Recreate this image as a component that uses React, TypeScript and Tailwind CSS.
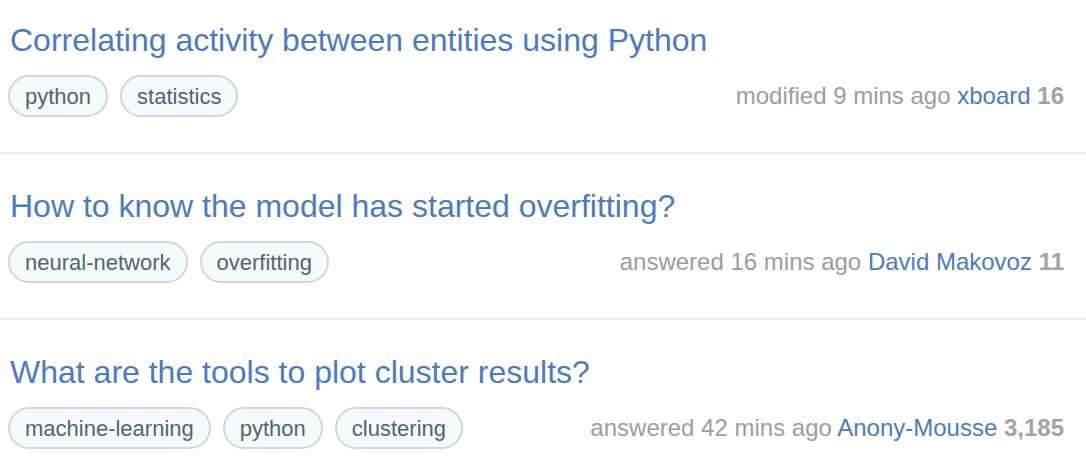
import React from 'react';

type Question = {
  title: string;
  tags: string[];
  action: string;
  time: string;
  user: string;
  rep: string;
};

const questions: Question[] = [
  {
    title: 'Correlating activity between entities using Python',
    tags: ['python', 'statistics'],
    action: 'modified',
    time: '9 mins ago',
    user: 'xboard',
    rep: '16',
  },
  {
    title: 'How to know the model has started overfitting?',
    tags: ['neural-network', 'overfitting'],
    action: 'answered',
    time: '16 mins ago',
    user: 'David Makovoz',
    rep: '11',
  },
  {
    title: 'What are the tools to plot cluster results?',
    tags: ['machine-learning', 'python', 'clustering'],
    action: 'answered',
    time: '42 mins ago',
    user: 'Anony-Mousse',
    rep: '3,185',
  },
];

const App = () => {
  return (
    <div
      className="w-[1086px] h-[476px] overflow-hidden bg-white"
      style={{ fontFamily: '"Liberation Sans", Arial, Helvetica, sans-serif' }}
    >
      <div className="-mt-[12px]">
        {questions.map((q, i) => (
          <div key={i} className="h-[166px] pt-[32px] pl-[10px] pr-[22px] border-b-2 border-[#eeeeee]">
            {/* Title */}
            <a className="block text-[32px] leading-[40px] text-[#4a7bc5] whitespace-nowrap">{q.title}</a>

            {/* Tags + meta */}
            <div className="mt-[15px] flex items-center justify-between">
              <div className="flex items-center gap-[12px] -ml-[2px]">
                {q.tags.map((t) => (
                  <span
                    key={t}
                    className="h-[42px] px-[15px] flex items-center rounded-full border-2 border-[#c8dae0] bg-[#f5fafd] text-[22px] text-[#536470]"
                  >
                    {t}
                  </span>
                ))}
              </div>
              <div className="text-[24px] text-[#9a9da3] whitespace-nowrap">
                {q.action} {q.time} <span className="text-[#4a7bc5]">{q.user}</span>{' '}
                <span className="font-bold text-[#9fa4aa]">{q.rep}</span>
              </div>
            </div>
          </div>
        ))}
      </div>
    </div>
  );
};

export default App;
